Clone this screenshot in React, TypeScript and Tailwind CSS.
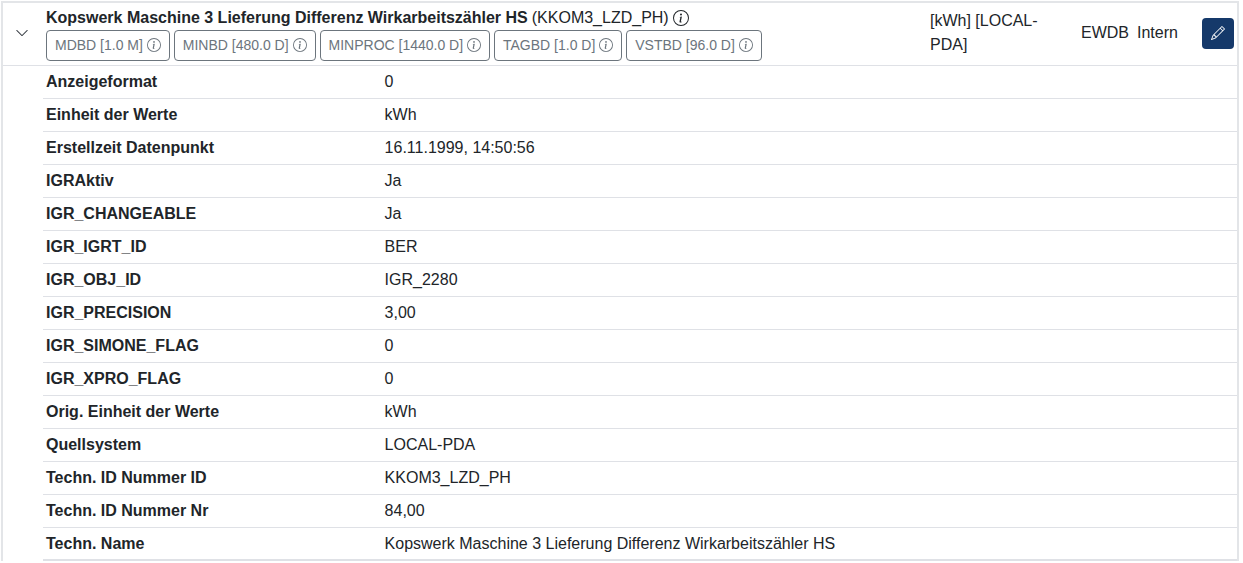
const tags = ['MDBD [1.0 M]', 'MINBD [480.0 D]', 'MINPROC [1440.0 D]', 'TAGBD [1.0 D]', 'VSTBD [96.0 D]'];

const rows = [
  ['Anzeigeformat', '0'],
  ['Einheit der Werte', 'kWh'],
  ['Erstellzeit Datenpunkt', '16.11.1999, 14:50:56'],
  ['IGRAktiv', 'Ja'],
  ['IGR_CHANGEABLE', 'Ja'],
  ['IGR_IGRT_ID', 'BER'],
  ['IGR_OBJ_ID', 'IGR_2280'],
  ['IGR_PRECISION', '3,00'],
  ['IGR_SIMONE_FLAG', '0'],
  ['IGR_XPRO_FLAG', '0'],
  ['Orig. Einheit der Werte', 'kWh'],
  ['Quellsystem', 'LOCAL-PDA'],
  ['Techn. ID Nummer ID', 'KKOM3_LZD_PH'],
  ['Techn. ID Nummer Nr', '84,00'],
  ['Techn. Name', 'Kopswerk Maschine 3 Lieferung Differenz Wirkarbeitszähler HS'],
];

function InfoIcon({ size }: { size: number }) {
  return (
    <svg width={size} height={size} viewBox="0 0 16 16" fill="currentColor" className="shrink-0">
      <path d="M8 15A7 7 0 1 1 8 1a7 7 0 0 1 0 14zm0 1A8 8 0 1 0 8 0a8 8 0 0 0 0 16z" />
      <path d="m8.93 6.588-2.29.287-.082.38.45.083c.294.07.352.176.288.469l-.738 3.468c-.194.897.105 1.319.808 1.319.545 0 1.178-.252 1.465-.598l.088-.42c-.2.176-.492.246-.686.246-.275 0-.375-.193-.304-.533L8.93 6.588zM9 4.5a1 1 0 1 1-2 0 1 1 0 0 1 2 0z" />
    </svg>
  );
}

export default function App() {
  return (
    <div className="h-[563px] w-[1243px] overflow-hidden bg-white pl-px pt-px font-['Liberation_Sans',sans-serif] text-base text-[#212529]">
      <div className="w-[1238px] border-x-2 border-t-2 border-[#e3e5e8]">
        <div className="flex h-[63px] items-center border-b border-[#dfe1e6] pb-[2px]">
          <div className="flex w-[43px] shrink-0 justify-center pr-[6px]">
            <svg width="14" height="14" viewBox="0 0 16 16" fill="currentColor" className="text-[#343a40]">
              <path d="M1.646 4.646a.5.5 0 0 1 .708 0L8 10.293l5.646-5.647a.5.5 0 0 1 .708.708l-6 6a.5.5 0 0 1-.708 0l-6-6a.5.5 0 0 1 0-.708z" />
            </svg>
          </div>
          <div className="mt-[5px] w-[884px] shrink-0 self-start">
            <div className="flex h-[20px] items-center">
              <span className="font-bold">Kopswerk Maschine 3 Lieferung Differenz Wirkarbeitszähler HS</span>
              <span className="ml-1">(KKOM3_LZD_PH)</span>
              <span className="ml-[4px]">
                <InfoIcon size={16} />
              </span>
            </div>
            <div className="mt-[2px] flex gap-1">
              {tags.map((t) => (
                <div key={t} className="flex h-[31px] items-center gap-[4px] rounded border border-[#6c757d] pb-[2px] pl-2 pr-[7.9px] text-sm text-[#6c757d]">
                  {t}
                  <InfoIcon size={14} />
                </div>
              ))}
            </div>
          </div>
          <div className="w-[151px] shrink-0 pr-[30px] leading-6">[kWh] [LOCAL-PDA]</div>
          <div className="flex w-[121px] shrink-0 gap-[8px]">
            <span>EWDB</span>
            <span>Intern</span>
          </div>
          <button className="flex h-[31px] w-[32px] shrink-0 items-center justify-center rounded bg-[#15396a] text-white">
            <svg width="14" height="14" viewBox="0 0 16 16" fill="currentColor">
              <path d="M12.146.146a.5.5 0 0 1 .708 0l3 3a.5.5 0 0 1 0 .708l-10 10a.5.5 0 0 1-.168.11l-5 2a.5.5 0 0 1-.65-.65l2-5a.5.5 0 0 1 .11-.168l10-10zM11.207 2.5 13.5 4.793 14.793 3.5 12.5 1.207 11.207 2.5zm1.586 3L10.5 3.207 4 9.707V10h.5a.5.5 0 0 1 .5.5v.5h.5a.5.5 0 0 1 .5.5v.5h.293l6.5-6.5zm-9.761 5.175-.106.106-1.528 3.821 3.821-1.528.106-.106A.5.5 0 0 1 5 12.5V12h-.5a.5.5 0 0 1-.5-.5V11h-.5a.5.5 0 0 1-.468-.325z" />
            </svg>
          </button>
        </div>
        <div className="pl-[40px]">
          {rows.map(([k, v], i) => (
            <div key={k} className={`flex h-[33px] items-center border-b pl-[3px] ${i === rows.length - 1 ? 'border-b-2 border-[#dfe1e6]' : 'border-[#dfe1e6]'}`}>
              <div className="w-[338.6px] shrink-0 font-bold">{k}</div>
              <div>{v}</div>
            </div>
          ))}
        </div>
      </div>
    </div>
  );
}
